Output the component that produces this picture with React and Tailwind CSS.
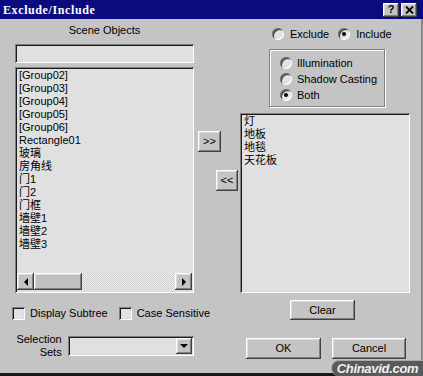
import React from "react";

const RAISED =
  "shadow-[inset_-1px_-1px_0_#404040,inset_1px_1px_0_#fff,inset_-2px_-2px_0_#808080,inset_2px_2px_0_#dcdcdc]";
const SUNKEN =
  "shadow-[inset_1px_1px_0_#808080,inset_-1px_-1px_0_#fff,inset_2px_2px_0_#1a1a1a,inset_-2px_-2px_0_#dcdcdc]";

function Radio({ on }) {
  return (
    <span className="w-[12px] h-[12px] shrink-0 rounded-full bg-[#e2e2e2] shadow-[inset_1px_1px_0_#808080,inset_-1px_-1px_0_#fff,inset_2px_2px_0_#404040] flex items-center justify-center">
      {on && <span className="w-[4px] h-[4px] rounded-full bg-black" />}
    </span>
  );
}

function Check() {
  return (
    <span
      className={`block w-[13px] h-[13px] shrink-0 bg-[#e2e2e2] ${SUNKEN}`}
    />
  );
}

function Btn({ className, children }) {
  return (
    <div
      className={`bg-[#c4c4c4] ${RAISED} flex items-center justify-center ${className}`}
    >
      {children}
    </div>
  );
}

function Tri({ dir }) {
  const pts =
    dir === "left"
      ? "5,0 5,8 1,4"
      : dir === "right"
      ? "1,0 1,8 5,4"
      : "0,1 8,1 4,5";
  return (
    <svg width={dir === "down" ? 8 : 6} height={dir === "down" ? 6 : 8}>
      <polygon points={pts} fill="#000" />
    </svg>
  );
}

export default function App() {
  const left = [
    "[Group02]",
    "[Group03]",
    "[Group04]",
    "[Group05]",
    "[Group06]",
    "Rectangle01",
    "玻璃",
    "房角线",
    "门1",
    "门2",
    "门框",
    "墙壁1",
    "墙壁2",
    "墙壁3",
  ];
  const right = ["灯", "地板", "地毯", "天花板"];

  return (
    <div className="w-[423px] h-[376px] bg-[#c4c4c4] relative overflow-hidden flex flex-col text-[11px] text-black font-['Liberation_Sans','Noto_Sans_CJK_SC',sans-serif]">
      {/* title bar */}
      <div className="h-[19px] shrink-0 bg-[#0b0b80] flex items-center pl-[3px] pr-[6px]">
        <span className="text-white font-bold text-[12px] tracking-[0.6px] leading-none font-['Liberation_Serif',serif]">
          Exclude/Include
        </span>
        <div className="ml-auto flex gap-[2px]">
          <Btn className="w-[16px] h-[14px] font-bold text-[11px] leading-none">
            ?
          </Btn>
          <Btn className="w-[16px] h-[14px]">
            <svg width="9" height="8">
              <path d="M1 0.5 L8 7.5 M8 0.5 L1 7.5" stroke="#000" strokeWidth="1.8" />
            </svg>
          </Btn>
        </div>
      </div>

      {/* body */}
      <div className="flex flex-1 pl-[15px] border-l-2 border-l-[#e6e6e6] border-r-2 border-r-[#8a8a8a] -ml-[2px]">
        {/* left column */}
        <div className="w-[179px] shrink-0 flex flex-col">
          <div className="h-[25px] pt-[5px] leading-[13px] text-center">
            Scene Objects
          </div>
          <div className={`h-[19px] bg-[#e0e0e0] ${SUNKEN}`} />
          <div
            className={`mt-[4px] h-[226px] bg-[#e0e0e0] ${SUNKEN} p-[2px] flex flex-col`}
          >
            <div className="flex-1 pl-[2px] pt-0">
              {left.map((t) => (
                <div key={t} className="h-[13px] leading-[13px] whitespace-nowrap">
                  {t}
                </div>
              ))}
            </div>
            <div className="h-[17px] mb-[1px] flex">
              <Btn className="w-[17px] h-[17px]">
                <Tri dir="left" />
              </Btn>
              <div className={`w-[48px] h-[17px] bg-[#c0c0c0] ${RAISED}`} />
              <div className="flex-1 bg-[image:repeating-conic-gradient(#c8c8c8_0%_25%,#f4f4f4_0%_50%)] bg-[length:2px_2px]" />
              <Btn className="w-[17px] h-[17px]">
                <Tri dir="right" />
              </Btn>
            </div>
          </div>
          <div className="mt-[14px] -ml-[3px] flex items-center h-[13px] whitespace-nowrap">
            <Check />
            <span className="ml-[5px] leading-[13px]">Display Subtree</span>
            <span className="ml-[11px]">
              <Check />
            </span>
            <span className="ml-[5px] leading-[13px]">Case Sensitive</span>
          </div>
          <div className="mt-[13px] -ml-[15px] flex">
            <div className="w-[62px] text-right leading-[13px]">
              Selection
              <br />
              Sets
            </div>
            <div
              className={`ml-[6px] mt-[3px] w-[127px] h-[20px] bg-[#e0e0e0] ${SUNKEN} p-[2px] flex justify-end`}
            >
              <Btn className="w-[16px] h-full">
                <Tri dir="down" />
              </Btn>
            </div>
          </div>
        </div>

        {/* middle column */}
        <div className="w-[46px] shrink-0 flex flex-col">
          <Btn className="mt-[112px] ml-[4px] w-[23px] h-[21px] leading-none">
            &gt;&gt;
          </Btn>
          <Btn className="mt-[18px] ml-[22px] w-[22px] h-[21px] leading-none">
            &lt;&lt;
          </Btn>
        </div>

        {/* right column */}
        <div className="w-[170px] shrink-0 flex flex-col">
          <div className="mt-[9px] h-[12px] pl-[32px] flex items-center whitespace-nowrap leading-[12px]">
            <Radio />
            <span className="ml-[6px]">Exclude</span>
            <span className="ml-[9px]">
              <Radio on />
            </span>
            <span className="ml-[6px]">Include</span>
          </div>
          <div className="mt-[9px] ml-[29px] w-[116px] h-[58px] border border-[#808080] shadow-[1px_1px_0_#fff,inset_1px_1px_0_#fff] pt-[5px] pl-[10px] flex flex-col">
            <div className="h-[16px] flex items-center">
              <Radio />
              <span className="ml-[5px]">Illumination</span>
            </div>
            <div className="h-[16px] flex items-center whitespace-nowrap">
              <Radio />
              <span className="ml-[5px]">Shadow Casting</span>
            </div>
            <div className="h-[16px] flex items-center">
              <Radio on />
              <span className="ml-[5px]">Both</span>
            </div>
          </div>
          <div
            className={`mt-[6px] h-[180px] bg-[#e0e0e0] ${SUNKEN} p-[2px] pl-[4px]`}
          >
            {right.map((t) => (
              <div key={t} className="h-[13px] leading-[13px]">
                {t}
              </div>
            ))}
          </div>
          <Btn className="mt-[7px] ml-[50px] w-[65px] h-[20px]">Clear</Btn>
          <div className="mt-[18px] flex">
            <Btn className="ml-[6px] w-[75px] h-[21px]">OK</Btn>
            <Btn className="ml-[11px] w-[74px] h-[21px]">Cancel</Btn>
          </div>
        </div>
      </div>
      <div className="h-[3px] shrink-0 bg-[#1a1a1a]" />

      {/* watermark */}
      <div className="absolute right-0 bottom-0 w-[92px] h-[16px] rounded-l-[8px] bg-[#5a5a5a] border-t border-l border-[#a8a8a8] flex items-center justify-center">
        <span className="text-[#f2f2f2] font-bold italic text-[13px] tracking-[-0.3px] leading-none font-['Liberation_Sans',sans-serif]">
          Chinavid.com
        </span>
      </div>
    </div>
  );
}
